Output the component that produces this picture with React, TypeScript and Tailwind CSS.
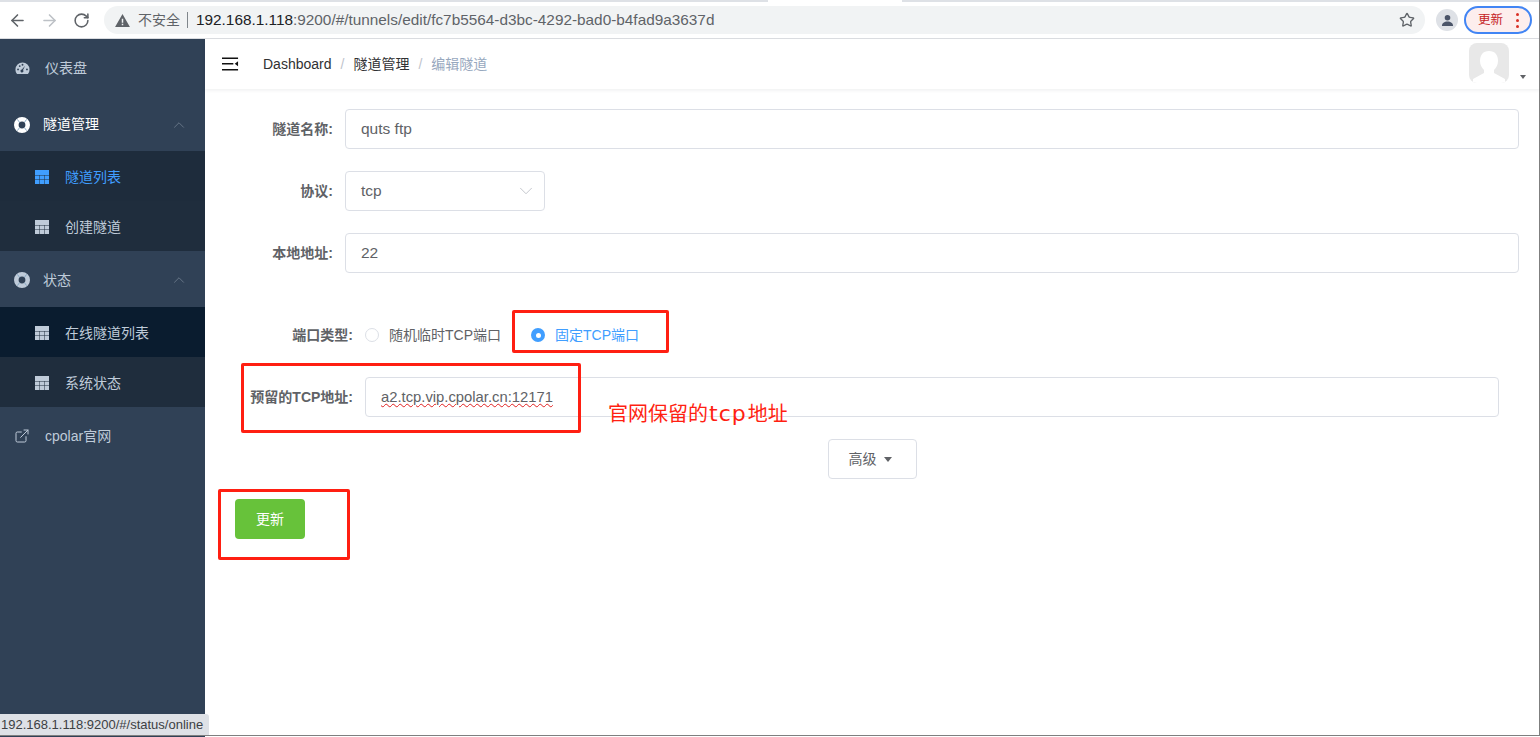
import { ArrowLeft, ArrowRight, ChevronDown, ChevronUp, ExternalLink, RotateCw, Star } from "lucide-react";

// Sidebar icons
const GaugeIcon = () => (
  <svg viewBox="0 0 16 14" className="w-[15px] h-[13px]" fill="currentColor">
    <path d="M8 0.5a7.6 7.6 0 0 0-7.6 7.6c0 1.9.6 3.5 1.7 4.9h11.8a7.6 7.6 0 0 0 1.7-4.9A7.6 7.6 0 0 0 8 .5z" />
    <circle cx="3.2" cy="8" r="1" fill="#304156" />
    <circle cx="5" cy="4.4" r="1" fill="#304156" />
    <circle cx="8" cy="3" r="1" fill="#304156" />
    <circle cx="12.8" cy="8" r="1" fill="#304156" />
    <path d="M10.8 4 8.6 8.6a1.6 1.6 0 1 1-1.3-.5z" fill="#304156" />
  </svg>
);

const BuoyIcon = () => (
  <svg viewBox="0 0 16 16" className="w-[16px] h-[16px]">
    <circle cx="8" cy="8" r="5.7" fill="none" stroke="currentColor" strokeWidth="4.6" />
    <path d="M3.4 2.4 5.6 5.4M12.6 2.4 10.4 5.4M3.4 13.6 5.6 10.6M12.6 13.6 10.4 10.6" stroke="#7fa3c0" strokeWidth="0.9" />
  </svg>
);

const TableIcon = () => (
  <svg viewBox="0 0 14 14" className="w-[14px] h-[14px]">
    <rect width="14" height="14" fill="currentColor" />
    <path d="M0 5.5h14M0 9.5h14M4.5 5v9M9.5 5v9" stroke="#1f2d3d" strokeOpacity="0.5" strokeWidth="1" />
  </svg>
);

const SubItem = ({ label, bg, active }: { label: string; bg: string; active?: boolean }) => (
  <div className={`h-[50px] flex items-center pl-[35px] pt-[2px] ${bg} ${active ? "text-[#409eff]" : "text-[#bfcbd9]"}`}>
    <TableIcon />
    <span className="ml-[16px]">{label}</span>
  </div>
);

const FormRow = ({ label, value }: { label: string; value: string }) => (
  <div className="flex items-center mb-[22px]">
    <label className="w-[120px] pr-[12px] text-right font-bold text-[#606266]">{label}</label>
    <div className="flex-1 h-[40px] flex items-center px-[15px] border border-[#dcdfe6] rounded-[4px] text-[15.5px] text-[#606266]">
      {value}
    </div>
  </div>
);

export default function App() {
  return (
    <div
      className="relative w-[1540px] h-[737px] overflow-hidden bg-white text-[14px] flex flex-col"
      style={{ fontFamily: '"Liberation Sans", "Noto Sans CJK SC", sans-serif' }}
    >
      {/* Browser toolbar */}
      <div className="h-[39px] shrink-0 bg-white border-b border-b-[#dadce0] relative flex items-center pt-[2px]">
        <div className="absolute left-0 top-0 w-[768px] h-[2px] bg-[#dee1e6]" />
        <div className="absolute left-[902px] right-0 top-0 h-[2px] bg-[#dee1e6]" />
        <div className="flex items-center pl-[8px] text-[#5f6368]">
          <ArrowLeft size={19} strokeWidth={2} />
          <ArrowRight size={19} strokeWidth={2} className="ml-[13px] text-[#bdc1c6]" />
          <RotateCw size={17} strokeWidth={2.2} className="ml-[14px]" />
        </div>
        <div className="ml-[14px] w-[1321px] h-[28px] rounded-full bg-[#f1f3f4] flex items-center pl-[11px] pr-[10px]">
          <svg viewBox="0 0 16 14" className="w-[15px] h-[13px]" fill="#5f6368">
            <path d="M8 0 16 14H0zM7.2 5v4.5h1.6V5zM7.2 10.5v1.6h1.6v-1.6z" fillRule="evenodd" />
          </svg>
          <span className="ml-[8px] text-[14px] text-[#5f6368]">不安全</span>
          <span className="ml-[7px] w-px h-[16px] bg-[#80868b]" />
          <span className="ml-[8px] text-[15.35px] text-[#202124]">
            192.168.1.118<span className="text-[#5f6368]">:9200/#/tunnels/edit/fc7b5564-d3bc-4292-bad0-b4fad9a3637d</span>
          </span>
          <Star size={16} strokeWidth={2} className="ml-auto text-[#5f6368]" />
        </div>
        <div className="ml-[11px] w-[22px] h-[22px] rounded-full bg-[#dee1e6] flex items-center justify-center">
          <svg viewBox="0 0 14 14" className="w-[13px] h-[13px]" fill="#4a5468">
            <circle cx="7" cy="4" r="3" />
            <path d="M1 13c0-3.4 2.6-5 6-5s6 1.6 6 5z" />
          </svg>
        </div>
        <div className="ml-[6px] w-[68px] h-[28px] rounded-full border-[2px] border-[#4285f4] bg-[#fdeeed] flex items-center pl-[12px] text-[12.5px] text-[#c5221f]">
          更新
          <span className="ml-auto mr-[11px] flex flex-col gap-[3px]">
            <i className="block w-[3px] h-[3px] rounded-full bg-[#d93025]" />
            <i className="block w-[3px] h-[3px] rounded-full bg-[#d93025]" />
            <i className="block w-[3px] h-[3px] rounded-full bg-[#d93025]" />
          </span>
        </div>
      </div>

      <div className="flex flex-1 min-h-0">
        {/* Sidebar */}
        <aside className="w-[205px] shrink-0 bg-[#304156] text-[#bfcbd9]">
          <div className="h-[57px] flex items-center pl-[15px] pt-[2px]">
            <GaugeIcon />
            <span className="ml-[15px]">仪表盘</span>
          </div>
          <div className="h-[55px] flex items-center pl-[14px] pr-[17px] pt-[2px] text-white">
            <BuoyIcon />
            <span className="ml-[13px]">隧道管理</span>
            <ChevronUp size={18} strokeWidth={0.9} className="ml-auto text-[#7f8c9c]" />
          </div>
          <SubItem label="隧道列表" bg="bg-[#1e2c3c]" active />
          <SubItem label="创建隧道" bg="bg-[#1f2d3d]" />
          <div className="h-[56px] flex items-center pl-[14px] pr-[17px] pt-[2px]">
            <BuoyIcon />
            <span className="ml-[13px]">状态</span>
            <ChevronUp size={18} strokeWidth={0.9} className="ml-auto text-[#7f8c9c]" />
          </div>
          <SubItem label="在线隧道列表" bg="bg-[#0a1c2f]" />
          <SubItem label="系统状态" bg="bg-[#1f2d3d]" />
          <div className="h-[58px] flex items-center pl-[14px]">
            <ExternalLink size={16} strokeWidth={1.5} />
            <span className="ml-[15px]">cpolar官网</span>
          </div>
        </aside>

        {/* Main */}
        <main className="flex-1 min-w-0">
          <header className="h-[50px] flex items-center shadow-[0_1px_4px_rgba(0,21,41,0.08)] pl-[17px] pr-[14px]">
            <svg viewBox="0 0 18 14" className="w-[17px] h-[14px]" fill="#111">
              <path d="M0 0h17v1.6H0zM0 6h12v1.6H0zM0 12.2h17v1.6H0zM17 4v5.5L13.5 6.8z" />
            </svg>
            <nav className="ml-[24px] flex items-center">
              <span className="text-[#303133]">Dashboard</span>
              <span className="mx-[9px] text-[#c0c4cc]">/</span>
              <span className="text-[#303133]">隧道管理</span>
              <span className="mx-[9px] text-[#c0c4cc]">/</span>
              <span className="text-[#97a8be]">编辑隧道</span>
            </nav>
            <div className="ml-auto flex items-end mt-[-2px]">
              <div className="w-[40px] h-[40px] rounded-[8px] bg-[#e8e8e8] overflow-hidden">
                <svg viewBox="0 0 40 40" className="w-full h-full" fill="#fff">
                  <path d="M20 8c6 0 9 4 9 10 0 4-2 7-4 9v3l11 6v4H4v-4l11-6v-3c-2-2-4-5-4-9 0-6 3-10 9-10z" />
                </svg>
              </div>
              <span className="ml-[11px] mb-[4px] w-0 h-0 border-x-[3.5px] border-x-transparent border-t-[4px] border-t-[#606266]" />
            </div>
          </header>

          <form className="pt-[20px] pl-[20px] pr-[21px]">
            <FormRow label="隧道名称:" value="quts ftp" />
            <div className="flex items-center mb-[22px]">
              <label className="w-[120px] pr-[12px] text-right font-bold text-[#606266]">协议:</label>
              <div className="w-[200px] h-[40px] flex items-center justify-between pl-[15px] pr-[7px] border border-[#dcdfe6] rounded-[4px] text-[15.5px] text-[#606266]">
                tcp
                <ChevronDown size={22} strokeWidth={0.8} className="text-[#b0b4bc]" />
              </div>
            </div>
            <FormRow label="本地地址:" value="22" />

            <div className="flex items-center h-[40px] mt-[42px] mb-[22px]">
              <label className="w-[140px] pr-[12px] text-right font-bold text-[#606266]">端口类型:</label>
              <span className="w-[14px] h-[14px] rounded-full border border-[#dcdfe6]" />
              <span className="ml-[10px] text-[#606266]">随机临时TCP端口</span>
              <span className="ml-[30px] w-[14px] h-[14px] rounded-full bg-[#409eff] flex items-center justify-center">
                <i className="block w-[5px] h-[5px] rounded-full bg-white" />
              </span>
              <span className="ml-[10px] text-[#409eff]">固定TCP端口</span>
            </div>

            <div className="flex items-center mb-[22px] pr-[20px]">
              <label className="w-[140px] pr-[12px] text-right font-bold text-[#606266] whitespace-nowrap">预留的TCP地址:</label>
              <div className="flex-1 h-[40px] flex items-center px-[15px] border border-[#dcdfe6] rounded-[4px] text-[14.8px] text-[#606266]">
                <span className="underline decoration-wavy decoration-[#e02020] decoration-1">a2.tcp.vip.cpolar.cn:12171</span>
              </div>
            </div>

            <div className="flex justify-center">
              <div className="w-[89px] h-[40px] flex items-center justify-center gap-[7px] pr-[4px] border border-[#dcdfe6] rounded-[4px] text-[#606266]">
                高级
                <span className="w-0 h-0 border-x-[4px] border-x-transparent border-t-[5px] border-t-[#606266]" />
              </div>
            </div>

            <button type="button" className="ml-[10px] mt-[20px] w-[70px] h-[40px] rounded-[4px] bg-[#67c23a] text-white">
              更新
            </button>
          </form>
        </main>
      </div>

      {/* Red annotations */}
      <div className="absolute left-[512px] top-[310px] w-[157px] h-[43px] border-[3px] border-[#ff1f12] rounded-[2px]" />
      <div className="absolute left-[241px] top-[363px] w-[340px] h-[70px] border-[3px] border-[#ff1f12] rounded-[2px]" />
      <div className="absolute left-[218px] top-[489px] w-[132px] h-[71px] border-[3px] border-[#ff1f12] rounded-[2px]" />
      <span className="absolute left-[608px] top-[400px] text-[20px] leading-[28px] text-[#ff1f12] whitespace-nowrap">
        官网保留的<span className="text-[22px] tracking-[1px] mx-[1px]" style={{ fontFamily: '"DejaVu Sans", sans-serif' }}>tcp</span>地址
      </span>

      {/* Status bubble */}
      <div className="absolute left-0 bottom-[2px] h-[21px] w-[209px] bg-[#dee1e6] rounded-tr-[3px] pl-[1px] flex items-center text-[13px] text-[#3c4043] whitespace-nowrap">
        192.168.1.118:9200/#/status/online
      </div>
      <div className="absolute left-0 right-0 bottom-[1px] h-px bg-[#7f7f7f]" />
      <div className="absolute right-0 top-0 bottom-[1px] w-px bg-[#7f7f7f]" />
    </div>
  );
}
